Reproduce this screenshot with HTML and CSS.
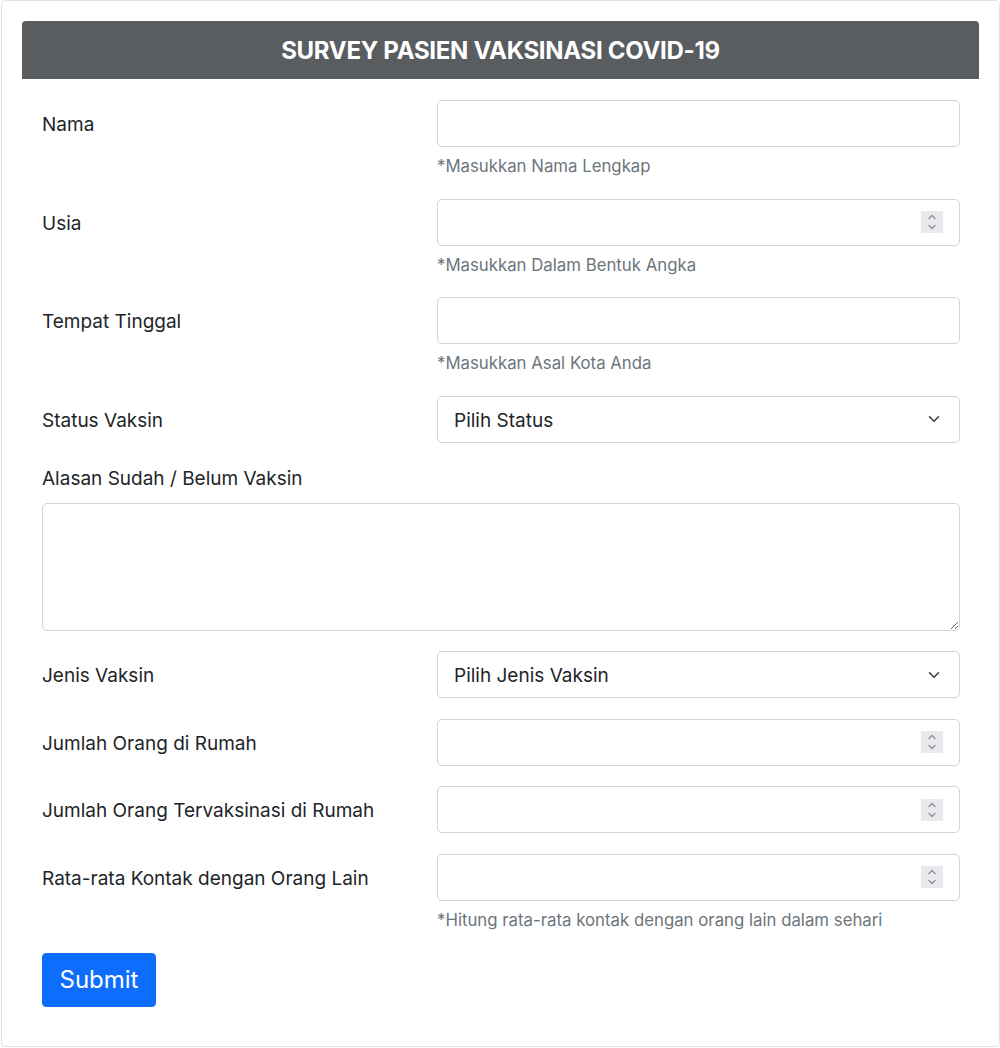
FILE: index.html
```html
<!DOCTYPE html>
<html lang="id">
<head>
<meta charset="utf-8">
<title>Survey Pasien Vaksinasi COVID-19</title>
<link rel="stylesheet" href="styles.css">
</head>
<body>
<div class="card">
  <div class="card-header">
    <h3 class="title">SURVEY PASIEN VAKSINASI COVID-19</h3>
  </div>
  <form class="form">
    <div class="row">
      <label class="col-label" for="nama">Nama</label>
      <div class="col-input">
        <input class="control" type="text" id="nama">
        <div class="help">*Masukkan Nama Lengkap</div>
      </div>
    </div>
    <div class="row">
      <label class="col-label" for="usia">Usia</label>
      <div class="col-input">
        <div class="num">
          <input class="control" type="number" id="usia">
          <span class="spin"><svg width="22" height="22" viewBox="0 0 22 22"><path d="M8 7.5l3-3 3 3M8 14.5l3 3 3-3" fill="none" stroke="#8e8e9c" stroke-width="1.3" stroke-linecap="round" stroke-linejoin="round"/></svg></span>
        </div>
        <div class="help">*Masukkan Dalam Bentuk Angka</div>
      </div>
    </div>
    <div class="row">
      <label class="col-label" for="tempat">Tempat Tinggal</label>
      <div class="col-input">
        <input class="control" type="text" id="tempat">
        <div class="help">*Masukkan Asal Kota Anda</div>
      </div>
    </div>
    <div class="row">
      <label class="col-label" for="status">Status Vaksin</label>
      <div class="col-input">
        <select class="control select" id="status">
          <option>Pilih Status</option>
        </select>
      </div>
    </div>
    <div class="block">
      <label class="block-label" for="alasan">Alasan Sudah / Belum Vaksin</label>
      <textarea class="control area" id="alasan"></textarea>
    </div>
    <div class="row">
      <label class="col-label" for="jenis">Jenis Vaksin</label>
      <div class="col-input">
        <select class="control select" id="jenis">
          <option>Pilih Jenis Vaksin</option>
        </select>
      </div>
    </div>
    <div class="row">
      <label class="col-label" for="jumlah">Jumlah Orang di Rumah</label>
      <div class="col-input">
        <div class="num">
          <input class="control" type="number" id="jumlah">
          <span class="spin"><svg width="22" height="22" viewBox="0 0 22 22"><path d="M8 7.5l3-3 3 3M8 14.5l3 3 3-3" fill="none" stroke="#8e8e9c" stroke-width="1.3" stroke-linecap="round" stroke-linejoin="round"/></svg></span>
        </div>
      </div>
    </div>
    <div class="row">
      <label class="col-label" for="tervaksin">Jumlah Orang Tervaksinasi di Rumah</label>
      <div class="col-input">
        <div class="num">
          <input class="control" type="number" id="tervaksin">
          <span class="spin"><svg width="22" height="22" viewBox="0 0 22 22"><path d="M8 7.5l3-3 3 3M8 14.5l3 3 3-3" fill="none" stroke="#8e8e9c" stroke-width="1.3" stroke-linecap="round" stroke-linejoin="round"/></svg></span>
        </div>
      </div>
    </div>
    <div class="row">
      <label class="col-label" for="kontak">Rata-rata Kontak dengan Orang Lain</label>
      <div class="col-input">
        <div class="num">
          <input class="control" type="number" id="kontak">
          <span class="spin"><svg width="22" height="22" viewBox="0 0 22 22"><path d="M8 7.5l3-3 3 3M8 14.5l3 3 3-3" fill="none" stroke="#8e8e9c" stroke-width="1.3" stroke-linecap="round" stroke-linejoin="round"/></svg></span>
        </div>
        <div class="help">*Hitung rata-rata kontak dengan orang lain dalam sehari</div>
      </div>
    </div>
    <button class="btn" type="button">Submit</button>
  </form>
</div>
</body>
</html>
```

FILE: styles.css
```css
* { box-sizing: border-box; }
html, body { margin: 0; padding: 0; }
body {
  font-family: Inter, "Noto Sans", sans-serif;
  color: #212529;
  background: #fff;
  font-size: 19px;
  line-height: 30px;
}
.card {
  margin-left: 1px;
  width: 999px;
  height: 1047px;
  border: 1px solid #dfe1e3;
  border-radius: 5px;
  padding: 20px 20px 0 20px;
}
.card-header {
  background: #5a5d60;
  border-radius: 4px 4px 0 0;
  height: 58px;
  display: flex;
  align-items: center;
  justify-content: center;
}
.title {
  margin: 0;
  color: #fff;
  font-size: 24px;
  font-weight: 700;
  letter-spacing: -0.3px;
  line-height: 29px;
}
.form {
  display: flex;
  flex-direction: column;
  padding: 21px 19px 0 20px;
}
.row {
  display: grid;
  grid-template-columns: 395px 1fr;
  margin-bottom: 20.5px;
}
.col-label {
  padding-top: 10px;
  line-height: 30px;
}
.num {
  position: relative;
}
.spin {
  position: absolute;
  right: 17px;
  top: 12.5px;
  width: 22px;
  height: 22px;
  background: #e9e9ee;
  display: block;
}
.spin svg { display: block; }
.control {
  display: block;
  width: 100%;
  height: 47px;
  border: 1px solid #ced4da;
  border-radius: 5px;
  padding: 8px 16px 6px 16px;
  font-family: inherit;
  font-size: 19px;
  color: #212529;
  background: #fff;
  outline: none;
}
input[type=number] { -moz-appearance: textfield; }
input[type=number]::-webkit-inner-spin-button,
input[type=number]::-webkit-outer-spin-button {
  -webkit-appearance: none;
  margin: 0;
}
.select {
  appearance: none;
  -webkit-appearance: none;
  background-image: url("data:image/svg+xml,%3csvg xmlns='http://www.w3.org/2000/svg' viewBox='0 0 16 16'%3e%3cpath fill='none' stroke='%23343a40' stroke-linecap='round' stroke-linejoin='round' stroke-width='2' d='m2 5 6 6 6-6'/%3e%3c/svg%3e");
  background-repeat: no-repeat;
  background-position: right 17px center;
  background-size: 16px 12px;
}
.help {
  padding-top: 7px;
  font-size: 16.8px;
  line-height: 24px;
  color: #6c757d;
}
.block {
  margin-bottom: 20.5px;
}
.block-label {
  display: block;
  padding-top: 1px;
  margin-bottom: 9px;
  line-height: 30px;
}
.area {
  height: 127.5px;
  resize: vertical;
}
.btn {
  align-self: flex-start;
  margin-top: 1px;
  background: #0d6efd;
  color: #fff;
  border: 1px solid #0d6efd;
  border-radius: 4px;
  font-family: inherit;
  font-size: 24px;
  line-height: 36px;
  padding: 8px 15px;
  width: 114px;
  height: 54px;
}
```
